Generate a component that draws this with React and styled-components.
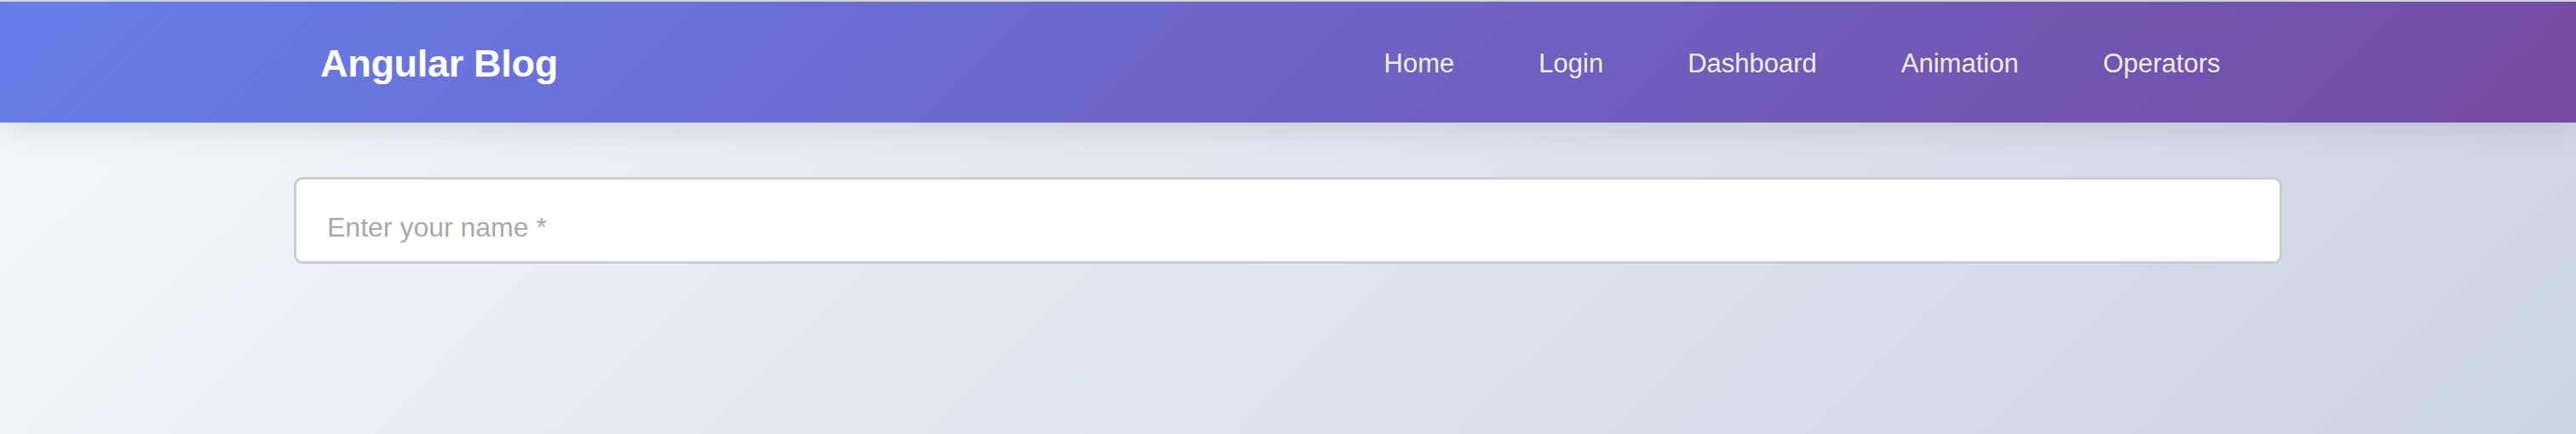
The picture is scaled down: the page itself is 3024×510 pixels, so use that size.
import React, { Component } from 'react';
import styled, { createGlobalStyle } from 'styled-components';

const GlobalStyle = createGlobalStyle`
    html, body {
        margin: 0;
        padding: 0;
    }
    body {
        font-family: 'Liberation Sans', Arial, Helvetica, sans-serif;
    }
`;

const Page = styled.div`
    min-height: 510px;
    box-sizing: border-box;
    border-top: 2px solid #dcdfe4;
    background: linear-gradient(135deg, #f5f7fa 0%, #cbd4e5 100%);
`;

const Header = styled.header`
    height: 142px;
    background: linear-gradient(135deg, #667eea 0%, #764ba2 100%);
    box-shadow: 0 4px 40px rgba(0, 0, 0, 0.12);
    position: relative;
    z-index: 1;
`;

const HeaderInner = styled.div`
    width: 2334px;
    height: 100%;
    margin: 0 auto;
    padding: 3px 23px 0 31px;
    box-sizing: border-box;
    display: flex;
    align-items: center;
    justify-content: space-between;
`;

const Logo = styled.a`
    color: #ffffff;
    font-size: 45px;
    font-weight: bold;
    letter-spacing: -0.3px;
    text-decoration: none;
`;

const Nav = styled.nav`
    display: flex;
    align-items: center;
`;

const NavLink = styled.a`
    color: rgba(255, 255, 255, 0.92);
    font-size: 31px;
    padding: 0 49.5px;
    text-decoration: none;
`;

const Main = styled.main`
    width: 2334px;
    margin: 64px auto 0;
`;

const NameInput = styled.input`
    display: block;
    width: 100%;
    height: 102px;
    box-sizing: border-box;
    border: 3.5px solid #cbcccd;
    border-radius: 10px;
    background: #ffffff;
    padding: 16px 36px 0;
    font-family: 'Liberation Sans', Arial, sans-serif;
    font-size: 32px;
    color: #333;
    outline: none;

    &::placeholder {
        color: #a9a9a9;
    }
`;

const links = ['Home', 'Login', 'Dashboard', 'Animation', 'Operators'];

class App extends Component {
    render() {
        return (
            <Page>
                <GlobalStyle />
                <Header>
                    <HeaderInner>
                        <Logo href='#'>Angular Blog</Logo>
                        <Nav>
                            {links.map((item) => (
                                <NavLink key={item} href='#'>
                                    {item}
                                </NavLink>
                            ))}
                        </Nav>
                    </HeaderInner>
                </Header>
                <Main>
                    <NameInput type='text' placeholder='Enter your name *' />
                </Main>
            </Page>
        );
    }
}

export default App;
